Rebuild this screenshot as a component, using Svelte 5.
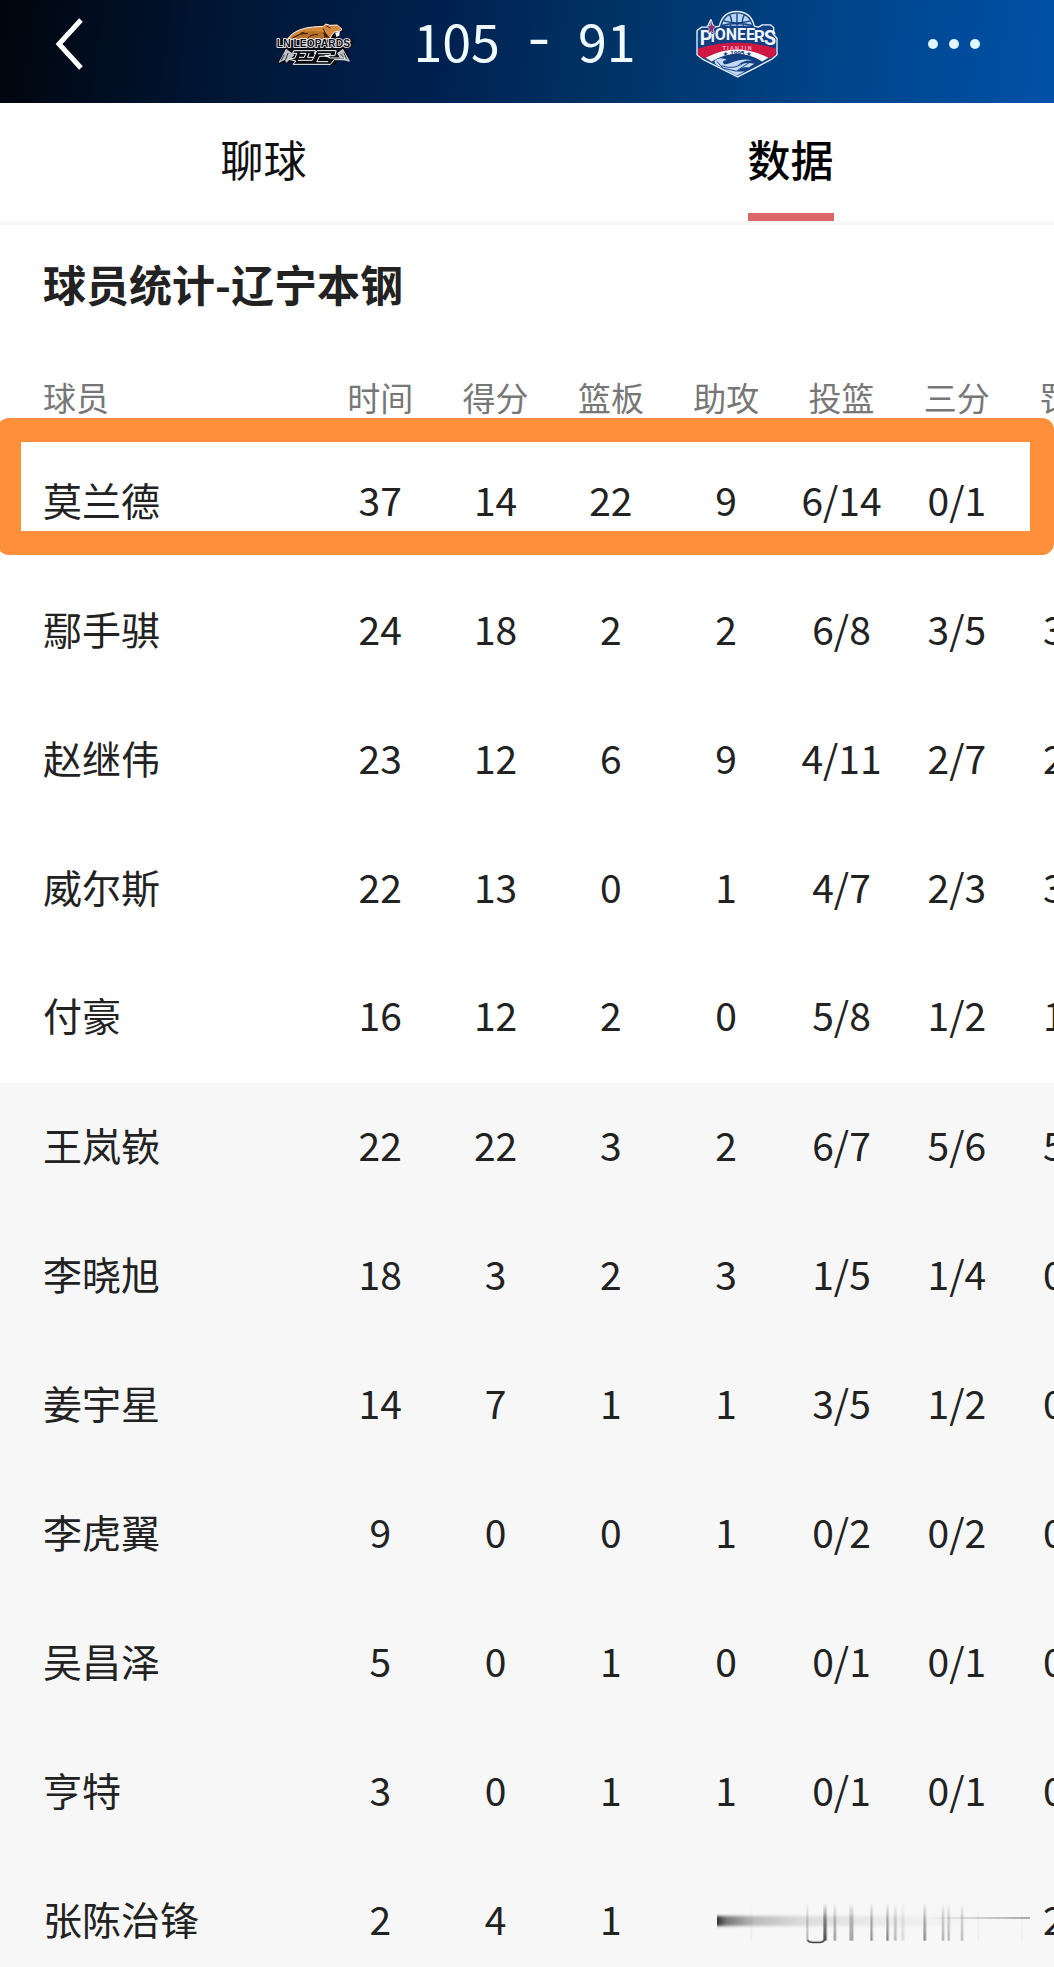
<script lang="ts">
    type Player = { name: string; stats: string[]; highlight?: boolean };

    const columns = ["时间", "得分", "篮板", "助攻", "投篮", "三分", "罚球"];

    const starters: Player[] = [
        { name: "莫兰德", stats: ["37", "14", "22", "9", "6/14", "0/1", ""], highlight: true },
        { name: "鄢手骐", stats: ["24", "18", "2", "2", "6/8", "3/5", "3/3"] },
        { name: "赵继伟", stats: ["23", "12", "6", "9", "4/11", "2/7", "2/2"] },
        { name: "威尔斯", stats: ["22", "13", "0", "1", "4/7", "2/3", "3/4"] },
        { name: "付豪", stats: ["16", "12", "2", "0", "5/8", "1/2", "1/2"] },
    ];

    const bench: Player[] = [
        { name: "王岚嵚", stats: ["22", "22", "3", "2", "6/7", "5/6", "5/5"] },
        { name: "李晓旭", stats: ["18", "3", "2", "3", "1/5", "1/4", "0/0"] },
        { name: "姜宇星", stats: ["14", "7", "1", "1", "3/5", "1/2", "0/0"] },
        { name: "李虎翼", stats: ["9", "0", "0", "1", "0/2", "0/2", "0/0"] },
        { name: "吴昌泽", stats: ["5", "0", "1", "0", "0/1", "0/1", "0/0"] },
        { name: "亨特", stats: ["3", "0", "1", "1", "0/1", "0/1", "0/0"] },
    ];

    // x, width, opacity of the vertical streaks
    const streaks = [
        [439, 6, 0.3], [490, 10, 0.8], [521, 7, 0.45], [568, 12, 0.4], [631, 7, 0.5],
        [679, 7, 0.55], [702, 8, 0.3], [723, 11, 0.1], [790, 8, 0.5], [846, 6, 0.4],
        [863, 6, 0.35], [903, 6, 0.35], [271, 5, 0.05], [953, 4, 0.05], [1084, 4, 0.04],
    ];

    let tab = $state("data");
</script>

{#snippet playerRow(player: Player)}
    <tr class:highlight={player.highlight}>
        <th scope="row">
            {player.name}
            {#if player.highlight}<span class="frame"></span>{/if}
        </th>
        {#each player.stats as value}
            <td>{value}</td>
        {/each}
    </tr>
{/snippet}

<div class="page">
    <header>
        <button class="back" aria-label="返回">
            <svg width="28" height="52" viewBox="0 0 28 52">
                <path d="M26 2 4 26 26 50" fill="none" stroke="#fff" stroke-width="5" />
            </svg>
        </button>

        <div class="match">
            <svg width="77" height="44" viewBox="55 50 230 132">
                <path d="M58 101h48L130 76C150 62 180 60 194 57l12-5 12 3 24 1 14 14-2 8-13 5 2 18h42l-2 22-18 5 11 31-32-4-12 23H104l-6-8-38 6 20-45-20-1z" fill="#0b0d14" />
                <path d="M88 103C106 75 140 66 178 64l18-1 8-7 12 4 22-1 14 12-4 6-18 3-8 9-6 12z" fill="#d28a3a" stroke="#fff" stroke-width="3" />
                <path d="M96 102C112 84 142 78 172 77l22 2 12 22z" fill="#b9702a" />
                <path d="M104 98q24-16 46-14M150 98q10-12 30-10M196 70l8 16-4 12M206 62l12 6M128 84l12-4" fill="none" stroke="#291608" stroke-width="3" />
                <path d="M202 96l-8-16 12 6 10 12z" fill="#401c10" />
                <path d="M232 82l14-3-2 12-8 4z" fill="#fff" />
                <path d="M85 132 64 171l18-9 4 9 22-22zM255 132l20 36-24-6-12-18z" fill="#b9bdc6" stroke="#eee" stroke-width="2" />
                <path d="M79 148l-9 17M91 143l-8 20M258 142l8 18M248 146l14 15" stroke="#2e3441" stroke-width="3" />
                <path d="M108 136h65l-3 9 8-9h57l-4 15h-30l17 7h44l-5 5h-28l-11 14H106l8-10-21-5 18-4 6-14h-13z" fill="#080a10" stroke="#fff" stroke-width="3" />
                <path d="M126 144h18l-5 12h-16M154 143l-5 13h17M181 145h37l-3 7-30 1-8 16h34M120 165h43l12-25" fill="none" stroke="#fff" stroke-width="3" />
                <text class="leopards" x="57" y="125">LN LEOPARDS</text>
            </svg>

            <div class="score">
                <span>105</span>
                <span class="dash">-</span>
                <span>91</span>
            </div>

            <svg width="82" height="68" viewBox="49 30 246 203">
                <path d="M119 78C126 48 146 34 171 34s46 14 53 44l12 3 12-7h24l10 8v22l10 10v50l-14 12-51 27-53 27-54-27-53-27-15-12V91l14-10h17l10-22 10 22z" fill="#123f82" stroke="#e8f6ff" stroke-width="4" stroke-linejoin="round" />
                <path d="M126 77C134 50 150 40 172 40s38 12 46 37z" fill="#b9d4f2" />
                <path d="M172 40v37M132 62q40 12 80 0M150 44q10 18 2 33M194 44q-10 18-2 33M126 76q46-12 92 0" fill="none" stroke="#123f82" stroke-width="4" />
                <path d="M55 145Q172 109 288 145v20l-22 11Q172 122 78 176l-23-11z" fill="#cf1742" />
                <path d="M78 173Q172 123 266 173l-18 11Q172 138 96 184z" fill="#f4f7ff" />
                <path d="M104 184c10-13 27-12 39-3-12-2-16 4-10 11 17 4 38-20 84-12-23 1-35 7-42 15 18-8 35-8 49-4l-17 11c-14-3-24 1-37 12h25l-23 12-51-26c-7-3-15-7-17-16z" fill="#c5d8f6" />
                <path d="M112 184l18 20 40 9 39-26M126 197q40 15 75-15" fill="none" stroke="#174988" stroke-width="3" />
                <g class="pioneers">
                    <text x="60" y="136" font-size="58">P</text>
                    <text x="93" y="126" font-size="46">i</text>
                    <text x="105" y="121" font-size="48">ONEE</text>
                    <text x="222" y="126" font-size="52">R</text>
                    <text x="252" y="136" font-size="60">S</text>
                </g>
                <path d="M95 58l4 17 11 5-9 6 3 16-9-8-10 7 4-16-8-7 11-2z" fill="#82336f" stroke="#e9e8ff" stroke-width="2" />
                <text class="city" x="172" y="150">T I A N J I N</text>
                <text class="year" x="173" y="168">★ 1995 ★</text>
            </svg>
        </div>

        <button class="more" aria-label="更多">
            <svg width="54" height="12" viewBox="0 0 54 12" fill="#dff8ff">
                <circle cx="6" cy="6" r="5" />
                <circle cx="27" cy="6" r="5" />
                <circle cx="48" cy="6" r="5" />
            </svg>
        </button>
    </header>

    <nav>
        <button class:active={tab === "chat"} onclick={() => (tab = "chat")}>聊球</button>
        <button class:active={tab === "data"} onclick={() => (tab = "data")}>数据</button>
    </nav>

    <main>
        <h1>球员统计-辽宁本钢</h1>

        <table>
            <colgroup>
                <col class="name-col" />
                {#each columns as _}<col class="stat-col" />{/each}
            </colgroup>
            <thead>
                <tr>
                    <th scope="col">球员</th>
                    {#each columns as column}
                        <th scope="col">{column}</th>
                    {/each}
                </tr>
            </thead>
            <tbody>
                {#each starters as player}
                    {@render playerRow(player)}
                {/each}
            </tbody>
            <tbody class="bench">
                {#each bench as player}
                    {@render playerRow(player)}
                {/each}
                <tr>
                    <th scope="row">张陈治锋</th>
                    <td>2</td>
                    <td>4</td>
                    <td>1</td>
                    <td class="smear" colspan="3">
                        <svg width="313" height="42" viewBox="171 132 939 126">
                            <defs>
                                <linearGradient id="trail">
                                    <stop offset="0" stop-color="#333" />
                                    <stop offset="0.03" stop-color="#777" />
                                    <stop offset="0.12" stop-color="#bbb" />
                                    <stop offset="0.28" stop-color="#ddd" />
                                    <stop offset="0.6" stop-color="#eee" />
                                    <stop offset="0.85" stop-color="#f7f7f7" />
                                </linearGradient>
                                <linearGradient id="tip">
                                    <stop offset="0" stop-color="#aaa" stop-opacity="0" />
                                    <stop offset="1" stop-color="#aaa" />
                                </linearGradient>
                                <linearGradient id="streak" x2="0" y2="1">
                                    <stop offset="0" stop-color="#222" stop-opacity="0" />
                                    <stop offset="0.4" stop-color="#222" stop-opacity="0.6" />
                                    <stop offset="1" stop-color="#222" />
                                </linearGradient>
                                <filter id="soften" x="-5%" width="110%" y="-50%" height="200%">
                                    <feGaussianBlur stdDeviation="0 5" />
                                </filter>
                                <filter id="soften-streaks">
                                    <feGaussianBlur stdDeviation="1 0" />
                                </filter>
                            </defs>
                            <rect x="171" y="174" width="939" height="30" fill="url(#trail)" filter="url(#soften)" />
                            <rect x="800" y="177" width="310" height="6" fill="url(#tip)" />
                            <g filter="url(#soften-streaks)">
                                {#each streaks as [x, width, opacity]}
                                    <rect {x} y="135" {width} height="113" fill="url(#streak)" {opacity} />
                                {/each}
                            </g>
                            <path d="M442 247q5 6 15 6h22q10 0 14-6" fill="none" stroke="#111" stroke-width="4" />
                        </svg>
                    </td>
                    <td>2/2</td>
                </tr>
            </tbody>
        </table>
    </main>
</div>

<style>
    :global(body) {
        margin: 0;
    }

    .page {
        height: 100vh;
        overflow: hidden;
        background: #fff;
        color: #222;
        font-family: "Noto Sans CJK SC", sans-serif;
    }

    button {
        padding: 0;
        border: 0;
        background: none;
        color: inherit;
        font: inherit;
        cursor: pointer;
    }

    svg {
        display: block;
    }

    header {
        display: grid;
        grid-template-columns: 1fr auto 1fr;
        align-items: center;
        height: 103px;
        padding: 0 55px 16px;
        box-sizing: border-box;
        background: linear-gradient(98deg, #01050c 0%, #001533 20%, #002150 42%, #003366 58%, #00458c 80%, #0051a8 100%);
    }

    .back {
        justify-self: start;
    }

    .more {
        justify-self: end;
        margin-right: 18px;
    }

    .match {
        display: flex;
        align-items: center;
        gap: 60px;
    }

    .score {
        display: flex;
        gap: 27px;
        padding-bottom: 8px;
        color: #f0fbff;
        font-size: 52px;
        line-height: 72px;
    }

    .dash {
        font-family: Inter, sans-serif;
    }

    .leopards {
        font: bold 31px "Liberation Sans", sans-serif;
        fill: #0b0d14;
        stroke: #fff;
        stroke-width: 5px;
        paint-order: stroke;
    }

    .pioneers {
        font-family: Roboto, sans-serif;
        font-weight: bold;
        fill: #eef5ff;
    }

    .city {
        font: bold 16px "Liberation Sans", sans-serif;
        fill: #f5b7cc;
        text-anchor: middle;
    }

    .year {
        font: bold 19px "Liberation Sans", "DejaVu Sans", sans-serif;
        fill: #17366f;
        text-anchor: middle;
    }

    nav {
        display: flex;
        justify-content: space-around;
        border-bottom: 4px solid #f7f7f7;

        & button {
            height: 118px;
            padding-bottom: 8px;
            border-top: 8px solid transparent;
            border-bottom: 8px solid transparent;
            box-sizing: border-box;
            color: #111;
            font-size: 43px;
            line-height: 60px;
        }

        & .active {
            border-bottom-color: #dc6666;
            color: #000;
            font-weight: 500;
        }
    }

    h1 {
        margin: 28px 43px 48px;
        font-size: 43px;
        font-weight: 700;
        line-height: 60px;
    }

    table {
        width: 107.2vw;
        border-collapse: collapse;
        table-layout: fixed;
    }

    .name-col {
        width: 30.6vw;
    }

    .stat-col {
        width: 10.94vw;
    }

    th,
    td {
        box-sizing: border-box;
        padding: 0;
        font-weight: 400;
        text-align: center;
        white-space: nowrap;
    }

    th:first-child {
        padding-left: 43px;
        text-align: left;
    }

    thead th {
        height: 76px;
        padding-bottom: 4px;
        color: #777;
        font-size: 33px;
        line-height: 48px;
    }

    tbody {
        & th,
        & td {
            height: 129px;
            padding-bottom: 6px;
            font-size: 39px;
            line-height: 56px;
        }
    }

    .bench {
        border-top: 2px solid #fff;
        background: #f7f7f7;
    }

    .highlight {
        position: relative;
    }

    /* marker drawn over the row, reaching into the header above it */
    .frame {
        position: absolute;
        top: -19px;
        right: 7.2vw;
        bottom: 11px;
        left: -3px;
        border: 24px solid #ff8f3a;
        border-radius: 12px;
        pointer-events: none;
    }

    tbody .smear {
        padding: 4px 0 0 48px;
    }
</style>
